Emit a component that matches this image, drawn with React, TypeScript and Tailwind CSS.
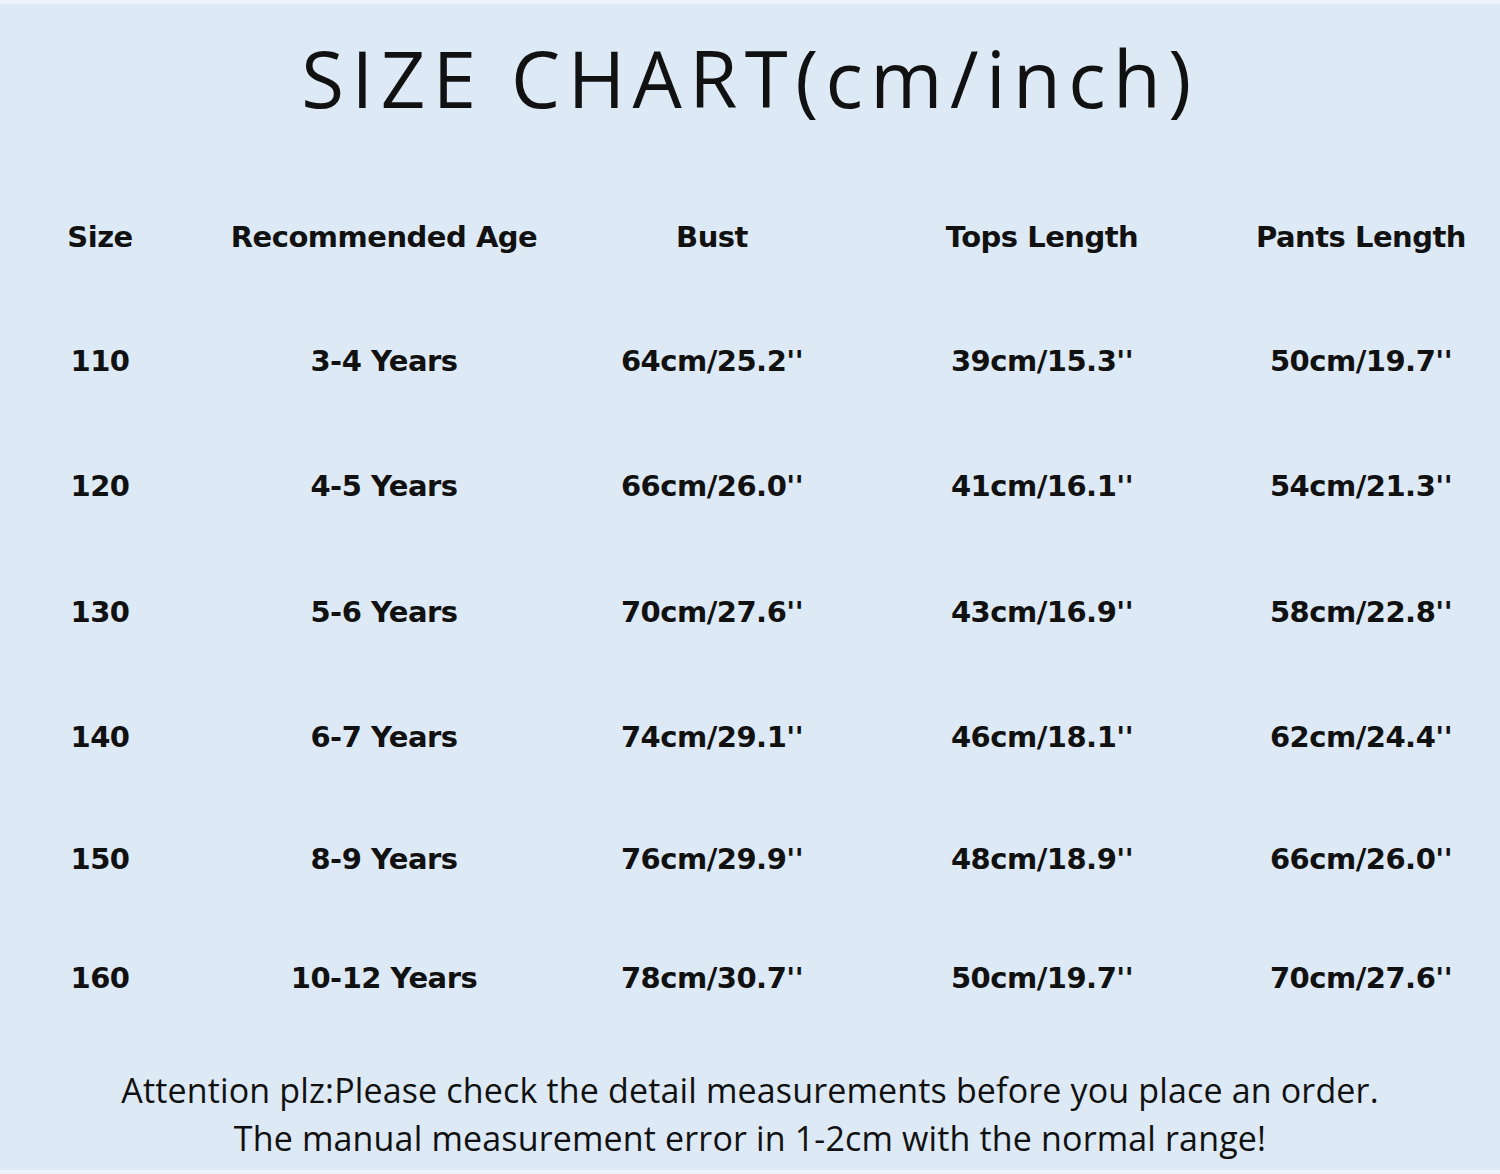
const headers = ["Size", "Recommended Age", "Bust", "Tops Length", "Pants Length"]

const rows = [
  ["110", "3-4 Years", "64cm/25.2''", "39cm/15.3''", "50cm/19.7''"],
  ["120", "4-5 Years", "66cm/26.0''", "41cm/16.1''", "54cm/21.3''"],
  ["130", "5-6 Years", "70cm/27.6''", "43cm/16.9''", "58cm/22.8''"],
  ["140", "6-7 Years", "74cm/29.1''", "46cm/18.1''", "62cm/24.4''"],
  ["150", "8-9 Years", "76cm/29.9''", "48cm/18.9''", "66cm/26.0''"],
  ["160", "10-12 Years", "78cm/30.7''", "50cm/19.7''", "70cm/27.6''"],
]

export default function App() {
  return (
    <div className="flex h-[1174px] w-[1500px] flex-col overflow-hidden border-y-4 border-[#edf3f9] bg-[#dde9f5] text-[#111]">
      <div className="flex h-[172px] shrink-0 items-start justify-center pt-[24px]">
        <h1 className="text-[78px] leading-[100px] font-normal tracking-[7.4px] [font-family:'Open_Sans',sans-serif]">
          SIZE CHART(cm/inch)
        </h1>
      </div>

      <div className="grid shrink-0 grid-cols-[200px_368px_288px_372px_266px] grid-rows-[123px_125px_126px_126px_124px_120px_118px] text-[29px] font-bold [font-family:'DejaVu_Sans',sans-serif]">
        {headers.map((h) => (
          <div key={h} className="flex items-center justify-center whitespace-nowrap tracking-[-0.5px]">
            {h}
          </div>
        ))}
        {rows.map((r) =>
          r.map((c, i) => (
            <div key={r[0] + i} className="flex items-center justify-center whitespace-nowrap tracking-[-0.5px]">
              {c}
            </div>
          ))
        )}
      </div>

      <div className="flex flex-col items-center pt-[28px] text-[34px] leading-[48px] tracking-[0.15px] [font-family:'Open_Sans',sans-serif]">
        <p>Attention plz:Please check the detail measurements before you place an order.</p>
        <p>The manual measurement error in 1-2cm with the normal range!</p>
      </div>
    </div>
  )
}
